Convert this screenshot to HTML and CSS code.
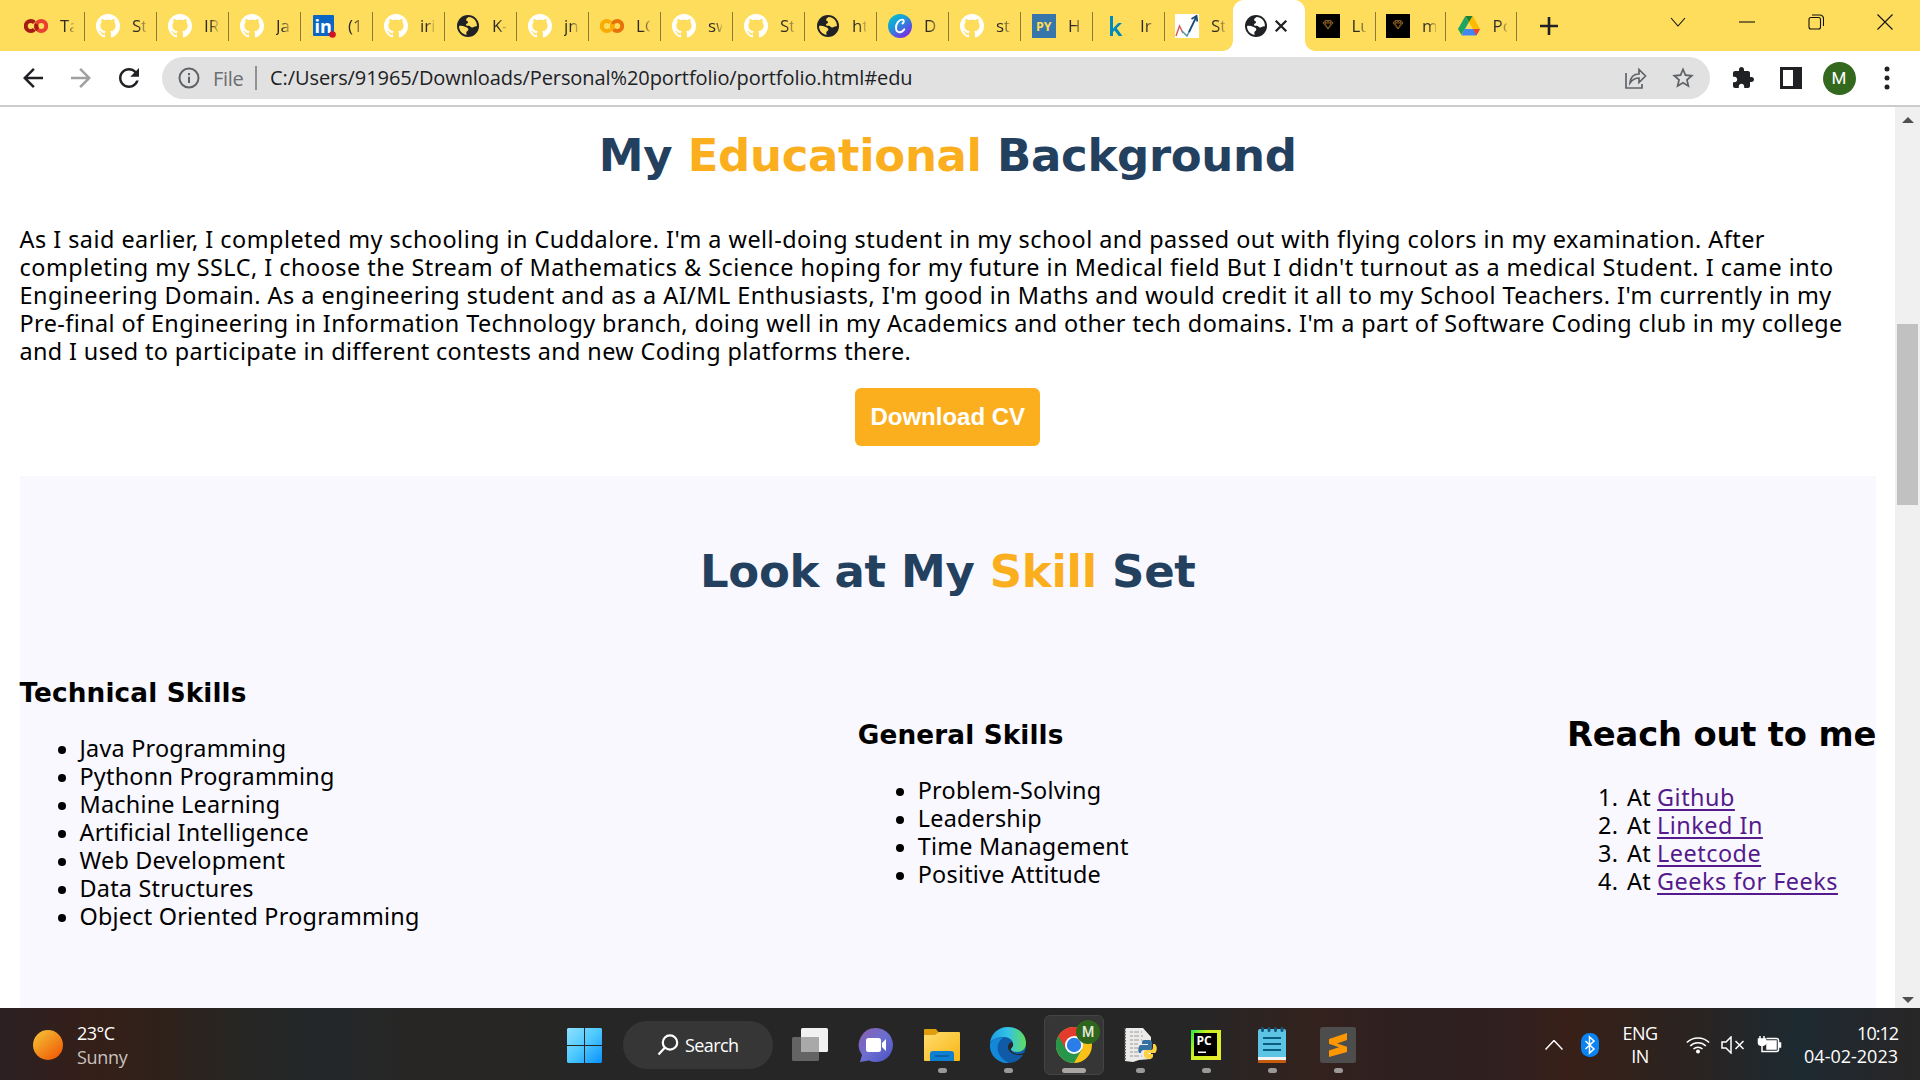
FILE: index.html
```html
<!DOCTYPE html>
<html lang="en">
<head>
<meta charset="utf-8">
<title>Personal portfolio</title>
<link rel="stylesheet" href="styles.css">
</head>
<body>
<svg class="sprite" aria-hidden="true">
  <symbol id="github" viewBox="0 0 16 16"><path fill="#fff" d="M8 0C3.58 0 0 3.58 0 8c0 3.54 2.29 6.53 5.47 7.59.4.07.55-.17.55-.38 0-.19-.01-.82-.01-1.49-2.01.37-2.53-.49-2.69-.94-.09-.23-.48-.94-.82-1.13-.28-.15-.68-.52-.01-.53.63-.01 1.08.58 1.23.82.72 1.21 1.87.87 2.33.66.07-.52.28-.87.51-1.07-1.78-.2-3.64-.89-3.64-3.95 0-.87.31-1.59.82-2.15-.08-.2-.36-1.02.08-2.12 0 0 .67-.21 2.2.82.64-.18 1.32-.27 2-.27s1.36.09 2 .27c1.53-1.04 2.2-.82 2.2-.82.44 1.1.16 1.92.08 2.12.51.56.82 1.27.82 2.15 0 3.07-1.87 3.75-3.65 3.95.29.25.54.73.54 1.48 0 1.07-.01 1.93-.01 2.2 0 .21.15.46.55.38A8.01 8.01 0 0 0 16 8c0-4.42-3.58-8-8-8z"/></symbol>
  <symbol id="globe" viewBox="0 0 24 24"><circle cx="12" cy="12" r="11" fill="#202124"/><path fill="currentColor" d="M12.6 3c-1.3.9-2.7 1.7-2.5 3.1.2 1.300 1.900.8 2 2.100.1 1.300-2.300 1.200-2.100 2.700.1 1 1.500.8 2.800.9 1.700.1 1.800 1.700 3.400 1.700 1.500 0 1.500-1.500 4.700-1.300C21.300 7.500 17.600 3.100 12.600 3zM3 12c1.900-.3 4.200-.2 6 .8 1.600.9 3.400 1 3.300 2.700-.1 1.500-1.700 1.500-2 2.900-.1.900.3 1.700.2 2.500C6.200 20.200 3 16.600 3 12z"/></symbol>
  <symbol id="colab" viewBox="0 0 24 24"><g fill="none" stroke-width="4"><path class="colab-a" d="M10.400 8.600A5 5 0 1 0 10.400 15.400"/><circle class="colab-b" cx="17.200" cy="12" r="5"/><path class="colab-a" d="M13.700 15.500A5 5 0 0 1 12.600 10"/></g></symbol>
  <symbol id="gem" viewBox="0 0 24 24"><path fill="#000" d="M0 0h24v24H0z"/><path fill="none" stroke="#8f6120" stroke-width=".9" d="M9 6.500h6l2 2.500L12 15 7 9zM7 9h10M10 6.500 9 9l3 6 3-6-1-2.500M10.500 9 12 6.500 13.500 9"/></symbol>
</svg>

<div class="browser">
  <header class="tabs">
    <div class="tab"><svg class="fav colab-red"><use href="#colab"/></svg><span>Tab</span></div>
    <div class="tab"><svg class="fav"><use href="#github"/></svg><span>Str</span></div>
    <div class="tab"><svg class="fav"><use href="#github"/></svg><span>IRI</span></div>
    <div class="tab"><svg class="fav"><use href="#github"/></svg><span>Jav</span></div>
    <div class="tab"><svg class="fav" viewBox="0 0 24 24"><rect x="1" y="1" width="21" height="21" rx="1" fill="#0a66c2"/><text x="2.500" y="18.500" font-size="18" font-weight="700" fill="#fff">in</text><circle cx="20.500" cy="20.500" r="3.300" fill="#d11124"/></svg><span>(1)</span></div>
    <div class="tab"><svg class="fav"><use href="#github"/></svg><span>iris</span></div>
    <div class="tab"><svg class="fav"><use href="#globe"/></svg><span>K-</span></div>
    <div class="tab"><svg class="fav"><use href="#github"/></svg><span>jn</span></div>
    <div class="tab"><svg class="fav colab-orange"><use href="#colab"/></svg><span>LG</span></div>
    <div class="tab"><svg class="fav"><use href="#github"/></svg><span>sw</span></div>
    <div class="tab"><svg class="fav"><use href="#github"/></svg><span>Str</span></div>
    <div class="tab"><svg class="fav"><use href="#globe"/></svg><span>htt</span></div>
    <div class="tab"><svg class="fav" viewBox="0 0 24 24"><defs><linearGradient id="cv" x1="0" y1="0" x2=".7" y2="1"><stop offset="0" stop-color="#00c4cc"/><stop offset=".45" stop-color="#1c9ad8"/><stop offset="1" stop-color="#7d2ae8"/></linearGradient></defs><circle cx="12" cy="12" r="12" fill="url(#cv)"/><path fill="none" stroke="#fff" stroke-width="1.900" stroke-linecap="round" d="M14.500 9.500c1.500-.6 2-3.700-.3-3.900-3.200-.2-6.300 4.300-6.200 8.200.1 5.600 5.700 5.600 8.300 1.500"/></svg><span>D</span></div>
    <div class="tab"><svg class="fav"><use href="#github"/></svg><span>st</span></div>
    <div class="tab"><svg class="fav" viewBox="0 0 24 24"><path fill="#3776ab" d="M0 0h24v24H0z"/><text x="4" y="16.500" font-size="12.500" font-weight="700" fill="#ffdb58">PY</text></svg><span>H</span></div>
    <div class="tab"><svg class="fav" viewBox="0 0 24 24"><path fill="#008abc" d="M6 2h3v12.500L14.300 9H18l-5.300 5.300L18.500 22h-3.800l-4.100-5.600L9 18v4H6z"/></svg><span>Ir</span></div>
    <div class="tab no-line"><svg class="fav" viewBox="0 0 24 24"><path fill="#fff" d="M0 0h24v24H0z"/><path fill="none" stroke="#d9534f" stroke-width="1.400" d="M1 22 4.500 12 8 19"/><path fill="none" stroke="#4a90a4" stroke-width="1.400" d="m7 17 5 5 3-6"/><path fill="none" stroke="#174b7c" stroke-width="1.800" d="M14 18 21.500 2.500M16.500 5l5-3 .8 5.500"/></svg><span>Sta</span></div>
    <div class="tab active"><svg class="fav"><use href="#globe"/></svg><svg class="tab-close" viewBox="0 0 12 12"><path d="m1.500 1.500 9 9m0-9-9 9"/></svg></div>
    <div class="tab narrow"><svg class="fav"><use href="#gem"/></svg><span>Lu</span></div>
    <div class="tab narrow"><svg class="fav"><use href="#gem"/></svg><span>m</span></div>
    <div class="tab narrow"><svg class="fav" viewBox="0 0 24 24"><path fill="#1fa463" d="M8.300 2 1 15l3.500 6L12 8z"/><path fill="#ffba00" d="M8.300 2h7.400l7.300 13h-7z"/><path fill="#4285f4" d="M7.800 15H23l-3.700 6.500H4.500z"/><path fill="#ea4335" d="M16 15h7l-3.700 6.500z"/><path fill="#188038" d="M8.300 2h7.200L12 8z"/></svg><span>Po</span></div>
    <svg class="plus" viewBox="0 0 18 18"><path d="M9 0v18M0 9h18"/></svg>
    <div class="window-controls">
      <svg viewBox="0 0 16 16"><path d="m1 4 7 8 7-8"/></svg>
      <svg viewBox="0 0 16 16"><path d="M0 8h16"/></svg>
      <svg viewBox="0 0 16 16"><rect x="1" y="3.500" width="11.500" height="11.500" rx="2"/><path d="M4 1h8a3.500 3.500 0 0 1 3.500 3.500V12"/></svg>
      <svg viewBox="0 0 16 16"><path d="m.5.500 15 15m0-15-15 15"/></svg>
    </div>
  </header>

  <div class="toolbar">
    <svg class="nav" viewBox="0 0 24 24"><path d="M20 11H7.830l5.590-5.590L12 4l-8 8 8 8 1.410-1.410L7.830 13H20v-2z"/></svg>
    <svg class="nav off" viewBox="0 0 24 24"><path d="M4 13h12.170l-5.590 5.590L12 20l8-8-8-8-1.410 1.410L16.170 11H4v2z"/></svg>
    <svg class="nav" viewBox="0 0 24 24"><path d="M17.650 6.350C16.200 4.900 14.210 4 12 4c-4.420 0-7.990 3.580-7.990 8s3.570 8 7.990 8c3.730 0 6.840-2.550 7.730-6h-2.080c-.82 2.330-3.040 4-5.650 4-3.310 0-6-2.690-6-6s2.690-6 6-6c1.660 0 3.140.69 4.220 1.780L13 11h7V4l-2.350 2.350z"/></svg>
    <div class="address">
      <svg class="info" viewBox="0 0 22 22"><circle cx="11" cy="11" r="9.500"/><path d="M11 9.700V16M11 6v2.200"/></svg>
      <span class="scheme">File</span>
      <span class="url">C:/Users/91965/Downloads/Personal%20portfolio/portfolio.html#edu</span>
      <svg class="share" viewBox="0 0 24 24"><path d="M2 7v15h16v-4M6 17c.5-6 4-9 9-9V3.500l6.500 6.500-6.500 6.500V12c-4 0-6.500 1.500-9 5z"/></svg>
      <svg class="star" viewBox="0 0 24 24"><path d="M22 9.240l-7.190-.62L12 2 9.190 8.630 2 9.240l5.460 4.730L5.820 21 12 17.270 18.180 21l-1.630-7.030L22 9.240zM12 15.400l-3.760 2.270 1-4.280-3.320-2.880 4.380-.38L12 6.100l1.710 4.040 4.380.38-3.320 2.880 1 4.280L12 15.400z"/></svg>
    </div>
    <div class="actions">
      <svg viewBox="0 0 24 24"><path d="M20.500 11H19V7c0-1.100-.9-2-2-2h-4V3.500C13 2.120 11.880 1 10.500 1S8 2.120 8 3.500V5H4c-1.100 0-1.990.9-1.990 2v3.800H3.500c1.490 0 2.700 1.210 2.700 2.700s-1.210 2.700-2.700 2.700H2V20c0 1.100.9 2 2 2h3.800v-1.500c0-1.490 1.210-2.700 2.700-2.700 1.490 0 2.700 1.210 2.700 2.700V22H17c1.100 0 2-.9 2-2v-4h1.500c1.380 0 2.500-1.120 2.500-2.500S21.880 11 20.500 11z"/></svg>
      <svg viewBox="0 0 24 24"><path fill-rule="evenodd" d="M1 1h22v22H1zm3 3v16h10V4z"/></svg>
      <span class="avatar">M</span>
      <svg viewBox="0 0 24 24"><circle cx="12" cy="3" r="2.500"/><circle cx="12" cy="12" r="2.500"/><circle cx="12" cy="21" r="2.500"/></svg>
    </div>
  </div>

  <div class="viewport">
    <main class="page">
      <h1>My <em>Educational</em> Background</h1>
      <p class="bio">
        <span class="l1">As I said earlier, I completed my schooling in Cuddalore. I'm a well-doing student in my school and passed out with flying colors in my examination. After</span>
        <span class="l2">completing my SSLC, I choose the Stream of Mathematics &amp; Science hoping for my future in Medical field But I didn't turnout as a medical Student. I came into</span>
        <span class="l3">Engineering Domain. As a engineering student and as a AI/ML Enthusiasts, I'm good in Maths and would credit it all to my School Teachers. I'm currently in my</span>
        <span class="l4">Pre-final of Engineering in Information Technology branch, doing well in my Academics and other tech domains. I'm a part of Software Coding club in my college</span>
        <span class="l5">and I used to participate in different contests and new Coding platforms there.</span>
      </p>
      <button class="cv">Download CV</button>
      <section class="skills">
        <h1>Look at My <em>Skill</em> Set</h1>
        <div class="columns">
          <div class="tech">
            <h3>Technical Skills</h3>
            <ul>
              <li>Java Programming</li>
              <li>Pythonn Programming</li>
              <li>Machine Learning</li>
              <li>Artificial Intelligence</li>
              <li>Web Development</li>
              <li>Data Structures</li>
              <li>Object Oriented Programming</li>
            </ul>
          </div>
          <div class="general">
            <h3>General Skills</h3>
            <ul>
              <li>Problem-Solving</li>
              <li>Leadership</li>
              <li>Time Management</li>
              <li>Positive Attitude</li>
            </ul>
          </div>
          <div class="reach">
            <h2>Reach out to me</h2>
            <ol>
              <li>At <a href="#">Github</a></li>
              <li>At <a href="#">Linked In</a></li>
              <li>At <a href="#">Leetcode</a></li>
              <li>At <a href="#">Geeks for Feeks</a></li>
            </ol>
          </div>
        </div>
      </section>
    </main>
    <div class="scrollbar"><i class="arrow up"></i><i class="thumb"></i><i class="arrow down"></i></div>
  </div>
</div>

<footer class="taskbar">
  <div class="weather"><i class="sun"></i><div><b>23°C</b><span>Sunny</span></div></div>
  <div class="apps">
    <svg class="start" viewBox="0 0 35 35"><defs><linearGradient id="wn" x1="0" y1="0" x2="1" y2="1"><stop offset="0" stop-color="#8fe0ff"/><stop offset=".5" stop-color="#4cc8ff"/><stop offset="1" stop-color="#0a90fa"/></linearGradient></defs><path fill="url(#wn)" d="M1 0h16v17H0V1zM18 0h16l1 1v16H18zM0 18h17v17H1l-1-1zM18 18h17v16l-1 1H18z"/></svg>
    <div class="search"><svg viewBox="0 0 22 22"><circle cx="13" cy="8.500" r="7.200"/><path d="m8 13.500-6.500 7"/></svg><span>Search</span></div>
    <div class="app"><svg viewBox="0 0 36 36"><rect y="10" width="27" height="24" rx="1.500" fill="#646464"/><rect x="9" y="1" width="27" height="24" rx="1.500" fill="#f1f1f1"/><path fill="#a9a9a9" d="M9 10h18v15H9z"/></svg></div>
    <div class="app"><svg viewBox="0 0 36 36"><defs><linearGradient id="ch" x1="0" y1="0" x2="1" y2="1"><stop offset="0" stop-color="#8a5fae"/><stop offset=".5" stop-color="#6c6fd0"/><stop offset="1" stop-color="#4a50c4"/></linearGradient></defs><path fill="url(#ch)" d="M18 1a17 17 0 1 1-7 32.500L2 35l2-7A17 17 0 0 1 18 1z"/><rect x="8" y="11" width="15" height="14" rx="2.500" fill="#fff"/><path fill="#fff" d="m24 16 4-4v12l-4-4z"/></svg></div>
    <div class="app open"><svg viewBox="0 0 36 36"><defs><linearGradient id="fo" x1="0" y1="0" x2="1" y2="1"><stop offset="0" stop-color="#ffdc70"/><stop offset="1" stop-color="#f8b611"/></linearGradient></defs><path fill="#e09d0c" d="M0 3q0-1 1-1h11l4 5-4 4H0z"/><path fill="url(#fo)" d="M0 8h11l4-3h20q1 0 1 1v27q0 1-1 1H1q-1 0-1-1z"/><path fill="#0f7fd0" d="M6 34V27q0-3 3-3h18q3 0 3 3v7z"/><path stroke="#0a4f91" stroke-width="1.200" d="M11 29h14"/></svg></div>
    <div class="app open"><svg viewBox="0 0 36 36"><defs><linearGradient id="e1"><stop offset="0" stop-color="#1b9de2"/><stop offset=".5" stop-color="#33c3e6"/><stop offset="1" stop-color="#62dd5c"/></linearGradient></defs><circle cx="18" cy="18" r="18" fill="#0f5ba8"/><path fill="url(#e1)" d="M0 16C1 6 9 0 18 0c11 0 18 8 18 16 0 6-4 9-9 9-5 0-7-2-6-4 1-1 2-2 2-4 0-4-4-7-9-7C7 10 1 13 0 16z"/><path fill="#1488d8" d="M0 17c2-5 8-7 13-6-5 3-7 10-4 16 2 4 6 7 10 9C8 37-1 28 0 17z"/><path fill="#262626" d="M23 17c1 3-3 4-2 6 2 5 10 5 15 2l0 2c-7 3-18 0-18-7 0-3 2-5 4-5z"/></svg></div>
    <div class="app open current"><svg viewBox="0 0 36 36"><circle cx="18" cy="18" r="18" fill="#fbc116"/><path fill="#28964a" d="M2.400 9A18 18 0 0 0 18 36l7.800-13.500L18 18z"/><path fill="#e33b2e" d="M2.400 9 10.200 22.500 18 9h15.600A18 18 0 0 0 2.400 9z"/><circle cx="18" cy="18" r="9" fill="#fff"/><circle cx="18" cy="18" r="7.200" fill="#2b7de9"/></svg><span class="badge">M</span></div>
    <div class="app open"><svg viewBox="0 0 36 36"><path fill="#ecebe9" d="M3 1h18l8 9v22l-12 1-6 2-8-1z"/><path stroke="#9b9b9b" stroke-width="1" stroke-dasharray="3 1 5 2" d="M8 5h12M8 9h13M8 13h12M8 17h8M8 21h8M8 25h8M8 29h12"/><path stroke="#555" stroke-dasharray="1.500 1.500" stroke-width="2" d="M3 1v33"/><path fill="#3670a0" d="M22 13h5q3 0 3 3v5q0 2-3 2h-5q-3 0-3 3h-2q-2-5 1-8h8v-1h-6v-2q0-2 2-2z"/><path fill="#ffd140" d="M31 17h2q3 3 1 8l-1 1h-7v1h5v2q0 3-4 3t-5-3v-4q0-2 3-2h4q2 0 2-3z"/></svg></div>
    <div class="app open"><svg viewBox="0 0 36 36"><defs><linearGradient id="pc" x1="0" y1="0" x2="1" y2=".6"><stop offset="0" stop-color="#21e94b"/><stop offset=".4" stop-color="#c8f31f"/><stop offset="1" stop-color="#e6ee2c"/></linearGradient></defs><path fill="url(#pc)" d="M3 3h30v30H3z"/><path d="M6 6h23v23H6z"/><text x="8.500" y="18" font-size="12" font-weight="700" fill="#fff">PC</text><path fill="#fff" d="M10 24.500h8V26h-8z"/></svg></div>
    <div class="app open"><svg viewBox="0 0 36 36"><path fill="#c85a0c" d="M4 30h28v5q0 1-1 1H5q-1 0-1-1z"/><path fill="#f5f5f5" d="M4 28h28v5H4z"/><path fill="#5dc4e6" d="M4 4q0-2 2-2h24q2 0 2 2v26H4z"/><path stroke="#0b5d81" stroke-width="2" d="M9 11h18M9 17h18M9 23h18"/><path stroke="#13597c" stroke-width="3" stroke-linecap="round" d="M8.500 1.500v2M15 1.500v2M21.500 1.500v2M28 1.500v2"/></svg></div>
    <div class="app open"><svg viewBox="0 0 36 36"><rect width="36" height="36" rx="2.500" fill="#4d4d4d"/><path fill="#ff9800" d="M27 6v7l-10 3.500 10 3.300V25L9 30v-6.500l10-3.300-10-3.400V12z"/></svg></div>
  </div>
  <div class="tray">
    <svg class="t-chev" viewBox="0 0 18 10"><path d="m.5 9.500 8.500-9 8.500 9"/></svg>
    <svg class="t-bt" viewBox="0 0 18 24"><rect width="18" height="24" rx="8.500" fill="#0a84f5" stroke="none"/><path d="m4.500 8 8.500 8-4.500 4V4L13 8l-8.500 8"/></svg>
    <div class="lang">ENG<br>IN</div>
    <svg class="t-wifi" viewBox="0 0 24 18"><path d="M.8 6.500a16 16 0 0 1 22.400 0M4.200 10a11 11 0 0 1 15.600 0M7.500 13a6.500 6.500 0 0 1 9 0"/><circle cx="12" cy="15.500" r="2"/></svg>
    <svg class="t-vol" viewBox="0 0 24 18"><path d="M1 6h4l5-5v16l-5-5H1zM14.500 5l8 8m0-8-8 8"/></svg>
    <svg class="t-bat" viewBox="0 0 24 20"><path d="M9 3.500h10q2 0 2 2v9q0 2-2 2H4.500v-6"/><path fill="#fff" d="M9.500 6h9v8h-9zM21.500 8h1.500v4h-1.500zM1 4h7v4q0 2-3.500 2.500Q1 10 1 8zM2.500 1v3M6.500 1v3"/></svg>
    <div class="clock"><span>10:12</span>04-02-2023</div>
  </div>
</footer>
</body>
</html>
```
FILE: styles.css
```css
* { box-sizing: border-box; }

body {
  margin: 0;
  width: 1920px;
  height: 1080px;
  overflow: hidden;
  background: #fff;
  font-family: "Noto Sans", sans-serif;
  color: #000;
}

svg { display: block; flex: none; }
.sprite { display: none; }

.browser { height: 1008px; display: flex; flex-direction: column; }

/* Tab strip */
.tabs {
  height: 51px;
  flex: none;
  display: flex;
  align-items: stretch;
  padding-left: 13px;
  background: #ffdd5c;
  font: 17px "Open Sans", sans-serif;
}
.tab {
  width: 72px;
  flex: none;
  display: flex;
  align-items: center;
  gap: 12px;
  padding-left: 11px;
  color: #ffdd5c;
  background: linear-gradient(#8c7a3a, #8c7a3a) right 12px / 1px 29px no-repeat;
}
.tab span {
  width: 14px;
  overflow: hidden;
  white-space: nowrap;
  background: linear-gradient(90deg, #2b2a24 45%, #2b2a2430);
  background-clip: text;
  color: transparent;
}
.tab.no-line { background: none; width: 68px; padding-left: 10px; }
.tab.narrow { width: 70.5px; padding-left: 10.5px; }
.fav { width: 24px; height: 24px; }
.fav text { font-family: "Open Sans", sans-serif; }
.colab-red { --a: #a51c14; --b: #e8412f; }
.colab-orange { --a: #f9ab00; --b: #e8710a; }
.colab-a { stroke: var(--a); }
.colab-b { stroke: var(--b); }
.tab.active {
  position: relative;
  width: 72px;
  gap: 6px;
  padding-left: 11px;
  background: #fff;
  color: #fff;
  border-radius: 11px 11px 0 0;
}
.tab.active::before,
.tab.active::after {
  content: "";
  position: absolute;
  bottom: 0;
  width: 10px; height: 10px;
}
.tab.active::before { left: -10px; background: radial-gradient(circle at 0 0, transparent 9.5px, #fff 10px); }
.tab.active::after { right: -10px; background: radial-gradient(circle at 100% 0, transparent 9.5px, #fff 10px); }
.tab-close { width: 14px; height: 14px; fill: none; stroke: #202124; stroke-width: 2; }
.plus { width: 18px; height: 18px; margin: 17px 0 0 23px; stroke: #202124; stroke-width: 2.6; }
.window-controls { display: flex; gap: 53px; margin: 14px 0 0 auto; padding-right: 27px; }
.window-controls svg { width: 16px; height: 16px; fill: none; stroke: #111; stroke-width: 1.1; }

/* Toolbar */
.toolbar {
  height: 56px;
  flex: none;
  display: flex;
  align-items: center;
  padding: 0 21px;
  border-bottom: 2px solid #ccc;
}
.nav { width: 30px; height: 30px; margin: 0 18px 0 -3px; fill: #202124; }
.nav + .nav { margin-left: 0; }
.nav.off { fill: #a0a0a0; }
.address {
  width: 1548px;
  height: 42px;
  display: flex;
  align-items: center;
  padding: 0 14px 0 16px;
  border-radius: 21px;
  background: #e1e1e1;
  font: 20px "Open Sans", sans-serif;
  color: #202124;
}
.info { width: 22px; height: 22px; fill: none; stroke: #5f6368; stroke-width: 2; }
.scheme { width: 42px; margin-left: 13px; padding-top: 1px; color: #6b6e72; font-size: 20px; letter-spacing: -.3px; }
.url { flex: 1; padding-left: 13px; border-left: 2px solid #8f9194; line-height: 24px; letter-spacing: -.08px; }
.share { width: 24px; height: 24px; margin-right: 22px; fill: none; stroke: #5f6368; stroke-width: 1.7; }
.star { width: 26px; height: 26px; fill: #5f6368; }
.actions { display: flex; align-items: center; gap: 24px; margin-left: 21px; fill: #202124; }
.actions svg { width: 24px; height: 24px; }
.avatar {
  width: 33px; height: 33px;
  margin: 0 -4.5px;
  border-radius: 50%;
  background: #33691e;
  color: #fff;
  font: 17px/33px Roboto, sans-serif;
  text-align: center;
}

/* Page */
.viewport { flex: 1; min-height: 0; display: flex; }
.page { width: 1895px; padding: 21px 19px 0 19.5px; overflow: hidden; }
h1, h2, h3, p, ul, ol { margin: 0; }
h1, h2, h3 { font-family: "DejaVu Sans", sans-serif; white-space: nowrap; }
h1 { font-size: 45px; line-height: 56px; letter-spacing: -.33px; color: #23415f; text-align: center; }
h1 em { font-style: normal; color: #fbaf1e; }
.bio { margin-top: 41px; font-size: 23.4px; line-height: 28px; white-space: nowrap; }
.bio span { display: block; }
.l1 { letter-spacing: .487px; }
.l2 { letter-spacing: .502px; }
.l3 { letter-spacing: .482px; }
.l4 { letter-spacing: .405px; }
.l5 { letter-spacing: .376px; }
.cv {
  display: block;
  width: 185px; height: 58px;
  margin: 23px auto 30px;
  padding: 0;
  border: 0;
  border-radius: 6px;
  background: #fbaf1e;
  color: #fff;
  font: bold 24px "Liberation Sans", sans-serif;
}
.skills { height: 540px; padding-top: 68px; background: #f9f8ff; }
.columns {
  display: flex;
  justify-content: space-between;
  align-items: center;
  margin-top: 76px;
  font-size: 23.4px;
  line-height: 28px;
  white-space: nowrap;
}
.tech { width: 399px; }
.general { width: 270px; }
.reach { width: 309px; margin-top: 2px; }
h3 { font-size: 26.3px; line-height: 34px; margin-bottom: 24px; letter-spacing: .13px; }
h2 { font-size: 33.75px; line-height: 42px; margin-bottom: 27px; letter-spacing: -.17px; }
ul, ol { padding-left: 60px; }
ul { list-style: none; letter-spacing: .22px; }
ul li::before {
  content: "";
  display: inline-block;
  width: 8px; height: 8px;
  margin: 0 13.5px 0 -21.5px;
  border-radius: 50%;
  background: #000;
  vertical-align: 3px;
}
ol li { letter-spacing: .2px; }
ol li::marker { content: counter(list-item) ".\a0\200a"; }
a { color: #551a8b; text-decoration: underline; text-decoration-thickness: 2px; text-underline-offset: 3px; letter-spacing: .5px; }

.scrollbar {
  width: 25px;
  display: flex;
  flex-direction: column;
  align-items: center;
  background: #f0f0f0;
}
.arrow { border: 6px solid transparent; }
.up { margin-top: 4px; border-bottom-color: #505050; }
.down { margin: auto 0 -1px; border-top-color: #505050; }
.thumb { width: 21px; height: 181px; margin-top: 201px; background: #c1c1c1; }

/* Taskbar */
.taskbar {
  height: 72px;
  display: flex;
  align-items: center;
  padding-top: 2px;
  background: linear-gradient(90deg, #2b2024 0, #351f18 90px, #2e221b 170px, #262624 240px, #23272a 330px, #282624 420px, #262626 600px, #262626 1200px, #33221d 1310px, #2e1f21 1420px, #30201f 1510px, #382018 1570px, #2b231f 1680px, #1d2a31 1800px, #24272a 1870px, #282626 1920px);
  color: #fff;
  font-family: "Open Sans", sans-serif;
  font-size: 18px;
}
.weather { width: 567px; display: flex; align-items: center; gap: 14px; padding-left: 33px; line-height: 24px; }
.weather b { display: block; font-weight: 400; letter-spacing: -.5px; }
.weather span { color: #c9c2bf; letter-spacing: -.3px; }
.sun { width: 30px; height: 30px; border-radius: 50%; background: linear-gradient(140deg, #f4bd35 10%, #f0670a 80%); }
.apps { display: flex; align-items: center; }
.start { width: 35px; height: 35px; margin-right: 21px; }
.search {
  width: 150px; height: 48px;
  display: flex;
  align-items: center;
  gap: 6px;
  margin-right: 4px;
  padding-left: 34px;
  border-radius: 24px;
  background: #373636;
  letter-spacing: -.6px;
}
.search svg { width: 22px; height: 22px; fill: none; stroke: #fff; stroke-width: 2.2; }
.app { position: relative; width: 66px; height: 60px; padding: 12px 15px; }
.app svg { width: 36px; height: 36px; }
.app text { font-family: "Open Sans", sans-serif; }
.open::after {
  content: "";
  position: absolute;
  left: 29px; bottom: 2px;
  width: 9px; height: 5px;
  border-radius: 3px;
  background: #9b9998;
}
.current { width: 60px; margin: 0 3px; border-radius: 6px; background: #363636; border: 1px solid #444; padding: 11px; }
.current::after { left: 17px; width: 24px; bottom: 1px; background: #aaa6a3; }
.badge {
  position: absolute;
  left: 31px; top: 4px;
  width: 24px; height: 24px;
  border-radius: 50%;
  background: #2f661d;
  color: #e4e9df;
  font: 500 14px/24px Roboto, sans-serif;
  text-align: center;
}
.tray { flex: 1; display: flex; align-items: center; justify-content: flex-end; padding-right: 22px; line-height: 23px; }
.tray svg { fill: none; stroke: #fff; stroke-width: 1.5; }
.tray .t-chev { width: 18px; height: 10px; margin-right: 18px; }
.tray .t-bt { width: 18px; height: 24px; margin-right: 23px; }
.lang { width: 36px; text-align: center; margin-right: 28px; letter-spacing: -.5px; }
.t-wifi { width: 24px; height: 18px; margin-right: 11px; }
.t-wifi circle { fill: #fff; stroke: none; }
.t-vol { width: 24px; height: 18px; margin-right: 12px; }
.t-bat { width: 25px; height: 20px; margin-right: 22px; }
.clock { width: 94px; text-align: right; white-space: nowrap; }
.clock span { display: block; letter-spacing: -1px; }
```
